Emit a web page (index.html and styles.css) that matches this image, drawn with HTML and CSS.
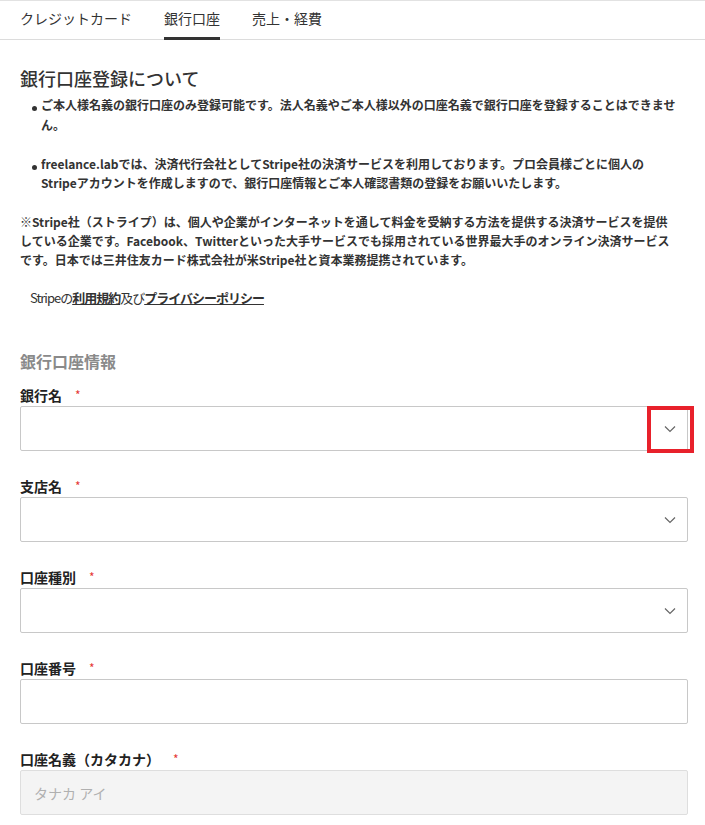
FILE: index.html
```html
<!DOCTYPE html>
<html lang="ja">
<head>
<meta charset="utf-8">
<link rel="stylesheet" href="styles.css">
</head>
<body>
<nav class="tabs">
  <div class="tab">クレジットカード</div>
  <div class="tab active">銀行口座</div>
  <div class="tab">売上・経費</div>
</nav>
<main class="content">
  <h2 class="title">銀行口座登録について</h2>
  <ul class="notes">
    <li>ご本人様名義の銀行口座のみ登録可能です。法人名義やご本人様以外の口座名義で銀行口座を登録することはできません。</li>
    <li>freelance.labでは、決済代行会社としてStripe社の決済サービスを利用しております。プロ会員様ごとに個人の<br>Stripeアカウントを作成しますので、銀行口座情報とご本人確認書類の登録をお願いいたします。</li>
  </ul>
  <p class="about">※Stripe社（ストライプ）は、個人や企業がインターネットを通して料金を受納する方法を提供する決済サービスを提供している企業です。Facebook、Twitterといった大手サービスでも採用されている世界最大手のオンライン決済サービスです。日本では三井住友カード株式会社が米Stripe社と資本業務提携されています。</p>
  <p class="terms">Stripeの<a class="link">利用規約</a>及び<a class="link">プライバシーポリシー</a></p>

  <h3 class="section">銀行口座情報</h3>

  <div class="field">
    <div class="label">銀行名<span class="req">*</span></div>
    <div class="box select">
      <svg class="chev" width="12" height="8" viewBox="0 0 12 8"><path d="M1 1.5 L6 6.5 L11 1.5" fill="none" stroke="#666" stroke-width="1.2"/></svg>
      <div class="highlight"></div>
    </div>
  </div>
  <div class="field">
    <div class="label">支店名<span class="req">*</span></div>
    <div class="box select">
      <svg class="chev" width="12" height="8" viewBox="0 0 12 8"><path d="M1 1.5 L6 6.5 L11 1.5" fill="none" stroke="#666" stroke-width="1.2"/></svg>
    </div>
  </div>
  <div class="field">
    <div class="label">口座種別<span class="req">*</span></div>
    <div class="box select">
      <svg class="chev" width="12" height="8" viewBox="0 0 12 8"><path d="M1 1.5 L6 6.5 L11 1.5" fill="none" stroke="#666" stroke-width="1.2"/></svg>
    </div>
  </div>
  <div class="field">
    <div class="label">口座番号<span class="req">*</span></div>
    <div class="box input"></div>
  </div>
  <div class="field">
    <div class="label">口座名義（カタカナ）<span class="req">*</span></div>
    <div class="box input disabled"><span class="ph">タナカ アイ</span></div>
  </div>
</main>
</body>
</html>
```
FILE: styles.css
```css
* { box-sizing: border-box; }
html, body { margin: 0; padding: 0; background: #fff; }
body {
  font-family: "Noto Sans CJK JP", "Noto Sans", sans-serif;
  color: #333;
  width: 705px;
}
.tabs {
  display: flex;
  gap: 32px;
  padding: 0 20px;
  height: 40px;
  border-top: 1px solid #e2e2e2;
  border-bottom: 1px solid #dcdcdc;
}
.tab {
  font-size: 14px;
  line-height: 35px;
  color: #333;
  height: 39px;
}
.tab.active {
  border-bottom: 3px solid #333;
}
.content {
  padding: 0 17px 0 20px;
}
.title {
  font-size: 18px;
  font-weight: 500;
  margin: 25px 0 0;
  line-height: 26px;
  color: #333;
}
.notes {
  list-style: none;
  margin: 4px 0 0;
  padding: 0 0 0 21px;
}
.notes li {
  position: relative;
  font-size: 12px;
  font-weight: 700;
  line-height: 19.5px;
  color: #333;
  margin-bottom: 19.5px;
}
.notes li::before {
  content: "";
  position: absolute;
  left: -9px;
  top: 11px;
  width: 5px;
  height: 5px;
  border-radius: 50%;
  background: #333;
}
.about {
  margin: 0;
  max-width: 652px;
  font-size: 12px;
  font-weight: 700;
  line-height: 19px;
  color: #333;
}
.terms {
  margin: 19px 0 0 10px;
  font-size: 13px;
  letter-spacing: -1px;
  line-height: 20px;
  color: #333;
}
.link {
  font-weight: 700;
  text-decoration: underline;
  color: #333;
}
.section {
  margin: 41px 0 0;
  font-size: 16px;
  font-weight: 700;
  line-height: 24px;
  color: #8a8a8a;
}
.field { margin-top: 12px; }
.field + .field { margin-top: 25px; }
.label {
  font-size: 14px;
  font-weight: 700;
  line-height: 20px;
  margin-bottom: 1px;
  color: #222;
}
.req {
  color: #e53935;
  font-size: 12px;
  font-weight: 400;
  margin-left: 13px;
  vertical-align: 1px;
}
.box {
  position: relative;
  height: 45px;
  width: 668px;
  border: 1px solid #c8c8c8;
  border-radius: 2px;
  background: #fff;
  display: flex;
  align-items: center;
}
.select { justify-content: flex-end; padding-right: 11px; }
.chev { display: block; }
.input.disabled {
  background: #f4f4f4;
  border-color: #dedede;
  padding-left: 13px;
}
.ph {
  font-size: 14px;
  color: #b0b0b0;
}
.highlight {
  position: absolute;
  left: 626px;
  top: -1px;
  width: 47px;
  height: 47px;
  border: 4px solid #e8212b;
}
```
